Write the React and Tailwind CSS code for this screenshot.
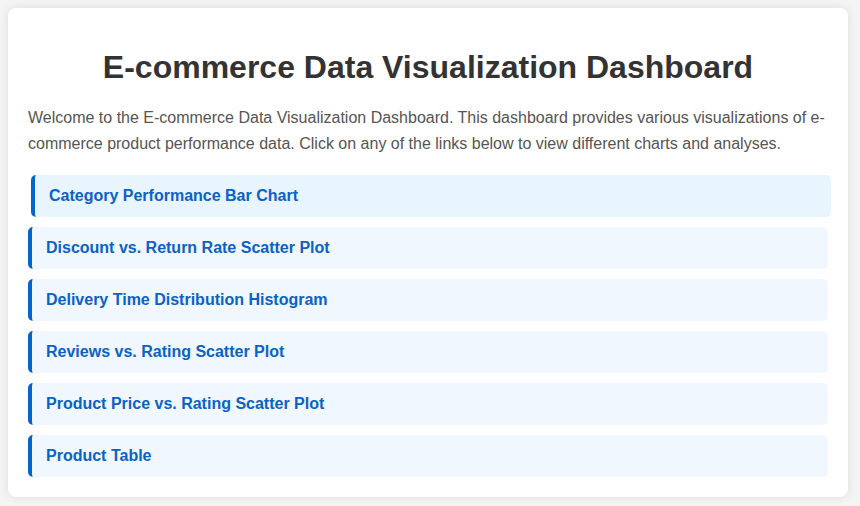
const links = [
  "Category Performance Bar Chart",
  "Discount vs. Return Rate Scatter Plot",
  "Delivery Time Distribution Histogram",
  "Reviews vs. Rating Scatter Plot",
  "Product Price vs. Rating Scatter Plot",
  "Product Table",
];

export default function App() {
  return (
    <div className="min-h-screen bg-[#f4f4f4] p-2 font-['Liberation_Sans',Arial,sans-serif]">
      <div className="w-[840px] bg-white rounded-lg shadow-[0_0_10px_rgba(0,0,0,0.1)] p-5">
        <h1 className="text-[32px] leading-[37px] font-bold text-[#333] text-center mt-[21px] mb-[19px]">
          E-commerce Data Visualization Dashboard
        </h1>
        <p className="text-base leading-[25.6px] text-[#555] mb-[19px]">
          Welcome to the E-commerce Data Visualization Dashboard. This dashboard provides various visualizations of e-commerce product performance data. Click on any of the links below to view different charts and analyses.
        </p>
        <ul className="flex flex-col gap-[10px]">
          {links.map((l, i) => (
            <li key={l}>
              <a
                href="#"
                className={
                  "block px-[14px] py-3 leading-[18px] border-l-4 border-[#0066cc] rounded-[5px] text-base font-bold text-[#0a62c4] " +
                  (i === 0 ? "bg-[#e8f4fe] translate-x-[3px]" : "bg-[#f0f7ff]")
                }
              >
                {l}
              </a>
            </li>
          ))}
        </ul>
      </div>
    </div>
  );
}
